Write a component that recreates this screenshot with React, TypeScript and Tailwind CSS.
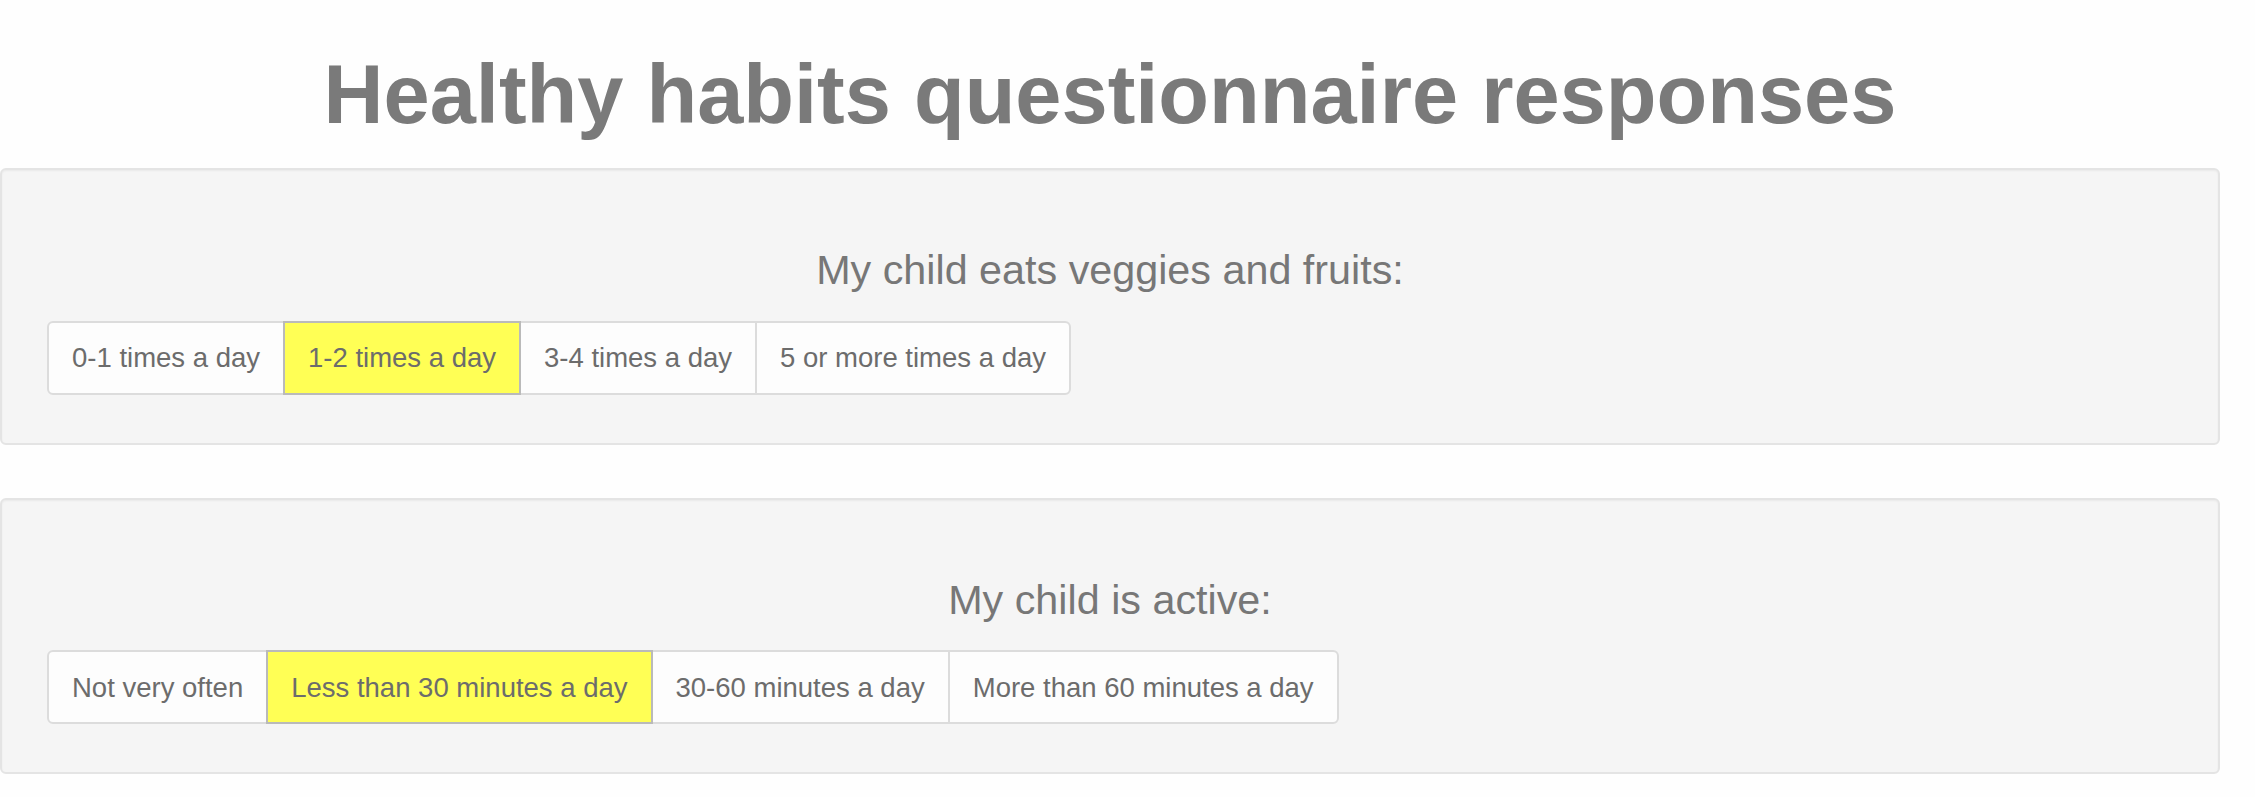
import React from 'react';

type Question = {
  prompt: string;
  options: string[];
  selected: number;
};

const questions: Question[] = [
  {
    prompt: 'My child eats veggies and fruits:',
    options: ['0-1 times a day', '1-2 times a day', '3-4 times a day', '5 or more times a day'],
    selected: 1,
  },
  {
    prompt: 'My child is active:',
    options: ['Not very often', 'Less than 30 minutes a day', '30-60 minutes a day', 'More than 60 minutes a day'],
    selected: 1,
  },
];

function OptionGroup({ options, selected }: { options: string[]; selected: number }) {
  return (
    <div className="flex">
      {options.map((opt, i) => {
        const first = i === 0;
        const last = i === options.length - 1;
        const active = i === selected;
        return (
          <div
            key={opt}
            className={[
              'relative flex h-[74px] items-center whitespace-nowrap border-2 px-[23px] text-[27.5px] text-[#6c6c6c]',
              first ? 'rounded-l-[6px]' : '-ml-[2px]',
              last ? 'rounded-r-[6px]' : '',
              active ? 'z-10 border-[#bababa] bg-[#ffff55]' : 'border-[#dcdcdc] bg-[#fdfdfd]',
            ].join(' ')}
          >
            {opt}
          </div>
        );
      })}
    </div>
  );
}

export default function App() {
  return (
    <div className="min-h-screen bg-[#fefefe] pt-[49px] font-['Liberation_Sans',Arial,sans-serif]">
      <div className="w-[2220px]">
        <h1 className="mb-[28px] text-center text-[83px] font-bold leading-[1.1] text-[#7a7a7a]">
          Healthy habits questionnaire responses
        </h1>

        <div className="flex flex-col gap-[53px]">
          {questions.map((q) => (
            <div
              key={q.prompt}
              className="rounded-[6px] border-2 border-[#e4e4e4] bg-[#f5f5f5] px-[45px] pt-[78px] pb-[48px] shadow-[inset_0_1px_2px_rgba(0,0,0,0.05)]"
            >
              <h3 className="mb-[27px] text-center text-[41.3px] leading-[1.1] text-[#777777]">{q.prompt}</h3>
              <OptionGroup options={q.options} selected={q.selected} />
            </div>
          ))}
        </div>
      </div>
    </div>
  );
}
